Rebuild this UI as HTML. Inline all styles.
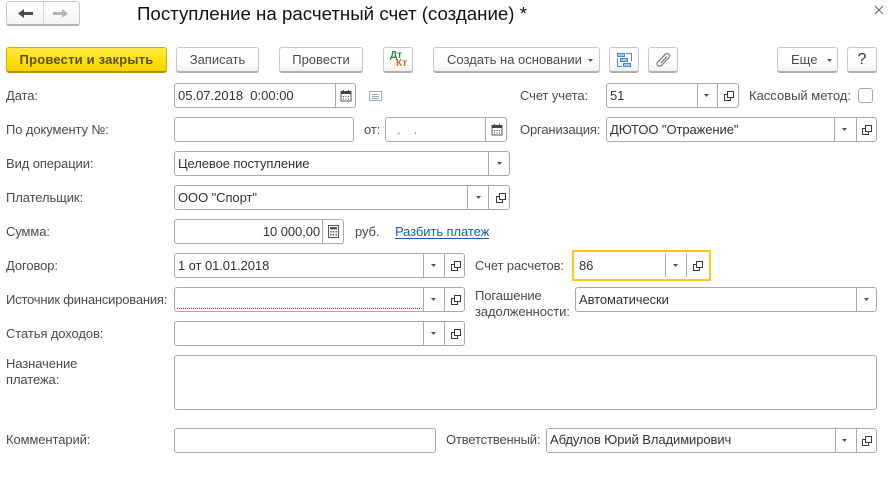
<!DOCTYPE html>
<html lang="ru"><head><meta charset="utf-8"><title>Поступление</title>
<style>
html,body{margin:0;padding:0;background:#fff}
#p{position:relative;width:892px;height:494px;overflow:hidden;background:#fff;font:13px "Liberation Sans",Arial,sans-serif;color:#4b4b4b}
#p div{position:absolute;box-sizing:border-box}
.l{white-space:nowrap;line-height:14px;color:#4e4a46;letter-spacing:-.1px}
.f{border:1px solid #a9a9a9;border-radius:3px;background:#fff;height:25px}
.t{white-space:nowrap;line-height:14px;color:#333;letter-spacing:-.08px}
.s{width:1px;top:0;bottom:0;background:#a9a9a9}
.b{top:47px;height:26px;border:1px solid #c8c8c8;border-bottom:2px solid #b0b0b0;border-radius:3px;background:linear-gradient(#fff,#fff 60%,#efefef);text-align:center;line-height:24px;color:#4b4b4b;white-space:nowrap}
svg{position:absolute;display:block}
.d{width:5px;height:3px}
.c{width:10px;height:10px}
</style></head><body><div id="p">
<svg width="0" height="0" style="left:0;top:0"><defs>
<g id="cp" fill="none" stroke="#3a3a3a"><rect x="3.500" y=".5" width="6" height="6"/><path d="M3.500 3.500H.5V9.500H6.500V6.500"/></g>
<path id="ar" d="M0 0H5L2.500 3Z" fill="#555"/>
<g id="cal"><path d="M1 2.500H11V12H1Z" fill="#fff" stroke="#555"/><path d="M1 2H11V5H1ZM3 1H4V3H3ZM8 1H9V3H8ZM3 7H4V8H3ZM5.500 7H6.500V8H5.500ZM8 7H9V8H8ZM3 9.500H4V10.500H3ZM5.500 9.500H6.500V10.500H5.500ZM8 9.500H9V10.500H8Z" fill="#444"/></g>
</defs></svg>

<div style="left:6px;top:1px;width:74px;height:25px;border:1px solid #c8c8c8;border-bottom:2px solid #b0b0b0;border-radius:3px;background:linear-gradient(#fff,#f4f4f4)"></div>
<div style="left:43px;top:2px;width:1px;height:22px;background:#d8d8d8"></div>
<svg style="left:18px;top:8px" width="15" height="11"><path d="M0 5.500L6 1V4H15V7H6V10Z" fill="#4a4a4a"/></svg>
<svg style="left:53px;top:8px" width="15" height="11"><path d="M15 5.500L9 1V4H0V7H9V10Z" fill="#b4b4b4"/></svg>
<div style="left:137px;top:3px;font-size:18.7px;line-height:22px;color:#111;white-space:nowrap">Поступление на расчетный счет (создание) *</div>
<svg style="left:873px;top:4px" width="12" height="12"><path d="M2 2L10 10M10 2L2 10" stroke="#666" stroke-width="1" fill="none"/></svg>

<div class="b" style="left:6px;width:161px;border-color:#cfae00;border-bottom-color:#ab9200;background:linear-gradient(#ffe94a,#ffde00 65%,#f6cf00);font-weight:bold;color:#5a5020;letter-spacing:.2px">Провести и закрыть</div>
<div class="b" style="left:176px;width:83px">Записать</div>
<div class="b" style="left:279px;width:84px">Провести</div>
<div class="b" style="left:383px;width:30px"></div>
<div style="left:390px;top:51px;font:bold 10px/10px 'Liberation Sans',sans-serif;color:#2e8b3c">Дт</div>
<div style="left:396px;top:59px;font:bold 10px/10px 'Liberation Sans',sans-serif;color:#c8642c">Кт</div>
<div class="b" style="left:433px;width:167px;padding-right:5px;text-align:left;padding-left:13px">Создать на основании</div>
<svg class="d" style="left:588px;top:59px"><use href="#ar"/></svg>
<div class="b" style="left:609px;width:30px"></div>
<svg style="left:617px;top:53px" width="15" height="14" fill="#a9c8e6" stroke="#4a86bf" stroke-width="1"><rect x=".5" y=".5" width="7" height="3"/><rect x="3.500" y="5.500" width="7" height="3"/><rect x="6.500" y="10.500" width="7" height="3"/><path d="M9 .5H14.500V8M.5 5V13.500H5" fill="none"/></svg>
<div class="b" style="left:648px;width:30px"></div>
<svg style="left:656px;top:52px" width="15" height="16" fill="none" stroke="#8a8a8a" stroke-width="1.300"><path d="M3 9L9 2.500C10.500 1 13 1.500 13.500 3C14 4.500 13 5.500 12.500 6L6 13C4.500 14.500 2.500 14.500 1.500 13.500C.5 12.500 1 10.500 2 9.500L8 3.500M5 11L11 4.500"/></svg>
<div class="b" style="left:777px;width:61px;text-align:left;padding-left:13px">Еще</div>
<svg class="d" style="left:827px;top:59px"><use href="#ar"/></svg>
<div class="b" style="left:847px;width:30px;font-size:16px;color:#333">?</div>

<div class="l" style="left:6px;top:89px">Дата:</div>
<div class="l" style="left:6px;top:123px">По документу №:</div>
<div class="l" style="left:6px;top:157px">Вид операции:</div>
<div class="l" style="left:6px;top:191px">Плательщик:</div>
<div class="l" style="left:6px;top:225px">Сумма:</div>
<div class="l" style="left:6px;top:259px">Договор:</div>
<div class="l" style="left:6px;top:293px;letter-spacing:-.2px">Источник финансирования:</div>
<div class="l" style="left:6px;top:327px">Статья доходов:</div>
<div class="l" style="left:6px;top:356px;line-height:16px">Назначение<br>платежа:</div>
<div class="l" style="left:6px;top:433px">Комментарий:</div>

<div class="f" style="left:174px;top:83px;width:182px"><div class="s" style="left:160px"></div></div>
<div class="t" style="left:178px;top:89px;letter-spacing:0">05.07.2018&nbsp; 0:00:00</div>
<svg style="left:340px;top:89px" width="12" height="13"><use href="#cal"/></svg>
<svg style="left:369px;top:91px" width="14" height="11" fill="none" stroke="#9fb0bb"><rect x=".5" y=".5" width="12" height="9"/><path d="M3 3.500H10M3 5.500H10M3 7.500H10"/></svg>

<div class="f" style="left:174px;top:117px;width:180px"></div>
<div class="l" style="left:364px;top:123px">от:</div>
<div class="f" style="left:385px;top:117px;width:122px"><div class="s" style="left:99px"></div></div>
<div class="t" style="left:397px;top:123px;color:#8a7a60;word-spacing:3px">.&nbsp; .</div>
<svg style="left:491px;top:123px" width="12" height="13"><use href="#cal"/></svg>

<div class="f" style="left:174px;top:151px;width:336px"><div class="s" style="left:313px"></div></div>
<div class="t" style="left:178px;top:157px">Целевое поступление</div>
<svg class="d" style="left:497px;top:162px"><use href="#ar"/></svg>

<div class="f" style="left:174px;top:185px;width:336px"><div class="s" style="left:292px"></div><div class="s" style="left:313px"></div></div>
<div class="t" style="left:178px;top:191px">ООО "Спорт"</div>
<svg class="d" style="left:476px;top:196px"><use href="#ar"/></svg>
<svg class="c" style="left:496px;top:193px"><use href="#cp"/></svg>

<div class="f" style="left:174px;top:219px;width:170px"><div class="s" style="left:147px"></div></div>
<div class="t" style="left:250px;top:225px;width:70px;text-align:right">10 000,00</div>
<svg style="left:328px;top:225px" width="11" height="13"><rect x=".5" y=".5" width="10" height="12" fill="#fff" stroke="#555"/><path d="M2 2H9V4.500H2ZM2 6H3.500V7.500H2ZM4.750 6H6.250V7.500H4.750ZM7.500 6H9V7.500H7.500ZM2 9H3.500V10.500H2ZM4.750 9H6.250V10.500H4.750ZM7.500 9H9V10.500H7.500Z" fill="#555"/></svg>
<div class="l" style="left:355px;top:225px">руб.</div>
<div style="left:395px;top:225px;line-height:14px;color:#1c5ca8;border-bottom:1px solid #1c5ca8;height:14px;white-space:nowrap;letter-spacing:-.08px">Разбить платеж</div>

<div class="f" style="left:174px;top:253px;width:291px"><div class="s" style="left:248px"></div><div class="s" style="left:269px"></div></div>
<div class="t" style="left:178px;top:259px">1 от 01.01.2018</div>
<svg class="d" style="left:431px;top:264px"><use href="#ar"/></svg>
<svg class="c" style="left:451px;top:261px"><use href="#cp"/></svg>

<div class="f" style="left:174px;top:287px;width:291px"><div class="s" style="left:248px"></div><div class="s" style="left:269px"></div></div>
<div style="left:177px;top:308px;width:243px;height:1px;background:repeating-linear-gradient(90deg,#e01010 0 1px,transparent 1px 2px)"></div>
<svg class="d" style="left:431px;top:298px"><use href="#ar"/></svg>
<svg class="c" style="left:451px;top:295px"><use href="#cp"/></svg>

<div class="f" style="left:174px;top:321px;width:291px"><div class="s" style="left:248px"></div><div class="s" style="left:269px"></div></div>
<svg class="d" style="left:431px;top:332px"><use href="#ar"/></svg>
<svg class="c" style="left:451px;top:329px"><use href="#cp"/></svg>

<div class="f" style="left:174px;top:355px;width:703px;height:55px"></div>
<div class="f" style="left:174px;top:428px;width:262px"></div>

<div class="l" style="left:520px;top:89px">Счет учета:</div>
<div class="f" style="left:606px;top:83px;width:133px"><div class="s" style="left:90px"></div><div class="s" style="left:110px"></div></div>
<div class="t" style="left:610px;top:89px">51</div>
<svg class="d" style="left:704px;top:94px"><use href="#ar"/></svg>
<svg class="c" style="left:724px;top:91px"><use href="#cp"/></svg>
<div class="l" style="left:749px;top:89px;letter-spacing:0">Кассовый метод:</div>
<div style="left:858px;top:88px;width:15px;height:15px;border:1px solid #a9a9a9;border-radius:3px"></div>

<div class="l" style="left:520px;top:123px;letter-spacing:-.15px">Организация:</div>
<div class="f" style="left:606px;top:117px;width:271px"><div class="s" style="left:227px"></div><div class="s" style="left:249px"></div></div>
<div class="t" style="left:610px;top:123px">ДЮТОО "Отражение"</div>
<svg class="d" style="left:842px;top:128px"><use href="#ar"/></svg>
<svg class="c" style="left:862px;top:125px"><use href="#cp"/></svg>

<div class="l" style="left:475px;top:259px">Счет расчетов:</div>
<div style="left:572px;top:250px;width:139px;height:31px;border:2px solid #fcc81e;background:#fff"></div>
<div style="left:665px;top:254px;width:1px;height:23px;background:#a9a9a9"></div>
<div style="left:686px;top:254px;width:1px;height:23px;background:#a9a9a9"></div>
<div class="t" style="left:579px;top:259px">86</div>
<svg class="d" style="left:673px;top:264px"><use href="#ar"/></svg>
<svg class="c" style="left:693px;top:261px"><use href="#cp"/></svg>

<div class="l" style="left:475px;top:288px;line-height:16px">Погашение<br>задолженности:</div>
<div class="f" style="left:575px;top:287px;width:302px"><div class="s" style="left:280px"></div></div>
<div class="t" style="left:579px;top:293px">Автоматически</div>
<svg class="d" style="left:864px;top:298px"><use href="#ar"/></svg>

<div class="l" style="left:446px;top:433px;letter-spacing:-.15px">Ответственный:</div>
<div class="f" style="left:546px;top:428px;width:331px"><div class="s" style="left:288px"></div><div class="s" style="left:309px"></div></div>
<div class="t" style="left:550px;top:433px">Абдулов Юрий Владимирович</div>
<svg class="d" style="left:842px;top:439px"><use href="#ar"/></svg>
<svg class="c" style="left:862px;top:436px"><use href="#cp"/></svg>
</div></body></html>
